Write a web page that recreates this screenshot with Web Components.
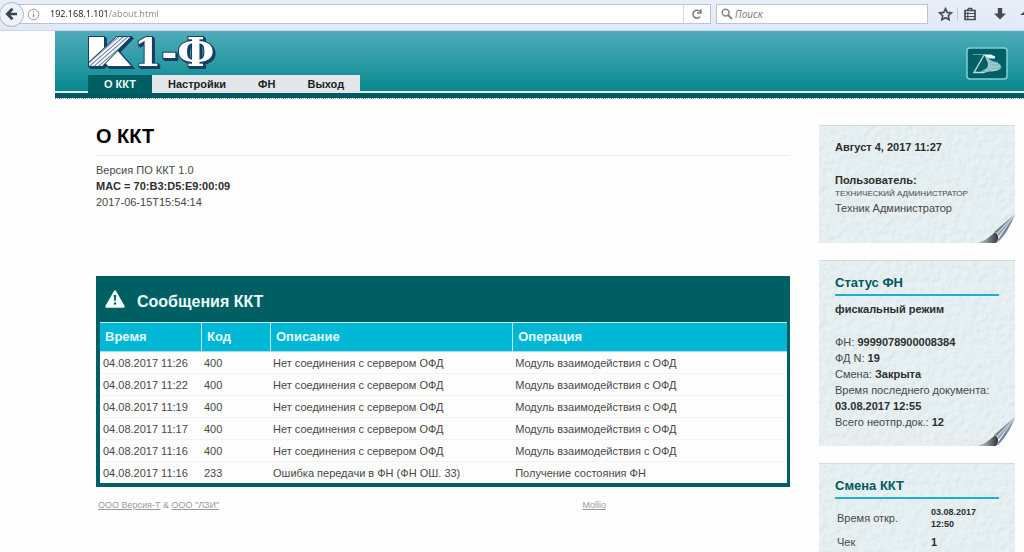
<!DOCTYPE html>
<html lang="ru">
<head>
<meta charset="utf-8">
<title>О ККТ</title>
<style>
html,body{margin:0;height:100%}
body{background:#fefefe;color:#484848;font:11px/16px "Liberation Sans",Arial,sans-serif;overflow:hidden}
</style>
</head>
<body>
<kkt-app></kkt-app>
<script>
const define=(name,html,setup)=>customElements.define(name,class extends HTMLElement{
  constructor(){
    super();
    const t=document.createElement('template');
    t.innerHTML=html;
    this.attachShadow({mode:'open'}).append(t.content.cloneNode(true));
  }
  connectedCallback(){if(setup)setup(this,this.shadowRoot)}
});

define('browser-bar',`<style>
:host{display:flex;align-items:center;height:31px;box-sizing:border-box;padding:0 0 2px;background:linear-gradient(#e9eff8,#dfe9f7);border-bottom:1px solid #ccd6e4;overflow:hidden;font:10px/16px "Noto Sans",sans-serif}
button{border:0;background:none;padding:0;display:grid;place-items:center;flex:none}
.back{width:25px;height:25px;margin-left:-1px;border:1px solid #a9b7c9;border-radius:50%;background:#edf3fb;z-index:1}
.url,.search{display:flex;align-items:center;height:20px;box-sizing:border-box;background:#fff;border:1px solid #b9c5d4}
.url{flex:1 1 700px;margin-left:-6px;padding-left:9px;border-left:0}
.search{flex:0 1 214px;margin-left:5px;padding-left:4px;gap:2px}
input{border:0;outline:0;padding:0;min-width:0;flex:1;font:inherit;height:16px;background:none;color:#222}
.address{margin-left:10px;background:linear-gradient(90deg,#222 59px,#8d8d8d 59px);-webkit-background-clip:text;background-clip:text;-webkit-text-fill-color:transparent;font-size:9px}
.search input{font-style:italic}
.search input::placeholder{color:#7b7b7b;opacity:1}
.reload{width:27px;height:18px;border-left:1px solid #d4dae2}
.info{flex:none}
nav{display:flex;align-items:center;flex:none;width:96px;padding-left:9px;box-sizing:border-box;overflow:hidden}
.fav{width:17px}.lib{width:24px;margin-left:3px;border-left:1px solid #c3ccd8}.down{width:16px;margin-left:11px}.next{width:12px;margin-left:12px}
</style>
<button class="back" aria-label="Назад"><svg width="14" height="14" viewBox="0 0 14 14"><path d="M7.5 1.8 2.3 7l5.2 5.2M2.8 7H12" fill="none" stroke="#3c4450" stroke-width="2.7"/></svg></button>
<div class="url"><svg class="info" width="13" height="13" viewBox="0 0 13 13" fill="none" stroke="#979797"><circle cx="6.5" cy="6.5" r="5.3"/><path d="M6.5 5.6v4M6.5 3v1.3" stroke-width="1.3"/></svg>
<input class="address" aria-label="Адрес" value="192.168.1.101/about.html">
<button class="reload" aria-label="Обновить"><svg width="12" height="12" viewBox="0 0 12 12"><path d="M9.2 8.6A4 4 0 1 1 9 3.5M9.9 1v4H6" fill="none" stroke="#7c7c7c" stroke-width="1.5"/></svg></button></div>
<div class="search"><svg width="12" height="12" viewBox="0 0 12 12" fill="none" stroke="#858585"><circle cx="4.6" cy="4.6" r="3.4" stroke-width="1.5"/><path d="m7 7 4 4" stroke-width="2"/></svg><input type="search" aria-label="Поиск" placeholder="Поиск"></div>
<nav>
<button class="fav" aria-label="Закладка"><svg width="15" height="15" viewBox="0 0 15 15"><path d="m7.5 1.7 1.7 3.7 4.1.5-3 2.8.8 4-3.6-2-3.6 2 .8-4-3-2.8 4.1-.5z" fill="none" stroke="#454b55" stroke-width="1.6"/></svg></button>
<button class="lib" aria-label="Библиотека"><svg width="14" height="14" viewBox="0 0 14 14" fill="none" stroke="#454b55"><path d="M2 3.5h10v9H2z" stroke-width="1.7"/><path d="M4.500 3.200 5.600 1.400h2.800l1.100 1.800" stroke-width="1.500"/><path d="M2 6.500h10M2 9.500h10M4.800 5v7"/></svg></button>
<button class="down" aria-label="Загрузки"><svg width="14" height="14" viewBox="0 0 14 14"><path d="M4.800 1h4.400v5.500H13l-6 6-6-6h3.800z" fill="#454b55"/></svg></button>
<button class="next" aria-label="Домой"><svg width="12" height="14" viewBox="0 0 12 14"><path d="m0 8 6-5 6 5z" fill="#454b55"/></svg></button>
</nav>`);

define('kkt-logo',`<style>
:host{display:block;height:40px}
svg{display:block;overflow:visible}
.lift{filter:drop-shadow(1px 1px 0 #173e63) drop-shadow(1px 1px 0 #173e63)}
</style>
<svg width="130" height="40" viewBox="0 0 130 40" role="img" aria-label="К1-Ф">
<defs><pattern id="s" width="3" height="3" patternUnits="userSpaceOnUse" patternTransform="rotate(-41)"><rect width="3" height="3" fill="#f4f8fc"/><rect width="3" height="1" fill="#6c819a"/></pattern></defs>
<g class="lift">
<g fill="#fff" stroke="#173e63" stroke-width="2" paint-order="stroke"><path d="M1 2h15v12L1 28z"/><path d="M22 17l6-3 15 17H20l-5-6z"/><path d="M29 2h13L14 31H1v-3z"/></g>
<path d="M29 2h13L14 31H1v-3z" fill="url(#s)"/>
<text x="46" y="31" font-family="DejaVu Serif,serif" font-weight="700" font-size="39" fill="#fff" stroke="#173e63" stroke-width="2" paint-order="stroke">1-Ф</text>
</g>
</svg>`);

define('kkt-header',`<style>
:host{display:flex;justify-content:space-between;align-items:flex-start;position:relative;height:62px;margin-left:55px;background:linear-gradient(#4fabb9,#2899a3 55%,#07858d);border-bottom:5px solid #005a60}
:host::before{content:"";position:absolute;left:0;right:0;bottom:0;height:2px;background:#def4f3}
:host::after{content:"";position:absolute;left:0;right:0;top:67px;border-top:1px dotted #77a9ab}
.left{padding:4px 0 0 33px;position:relative;z-index:1}
nav{display:flex;width:max-content;background:#e3e7e9}
a{padding:1px 16px;height:16px;font:bold 11px/17px "Liberation Sans",sans-serif;color:#1d1d1d;text-decoration:none;text-align:center}
a.on{background:#005f63;color:#e8f8f8;padding-bottom:2px;margin-bottom:-1px}
.brand{margin:16px 16px 0 0}
</style>
<div class="left"><kkt-logo></kkt-logo><nav><a class="on" href="#about">О ККТ</a><a href="#settings">Настройки</a><a href="#fn">ФН</a><a href="#exit">Выход</a></nav></div>
<svg class="brand" width="42" height="33" viewBox="0 0 42 33"><rect x="1" y="1" width="40" height="31" rx="3" fill="#025f66" stroke="#80d1d3" stroke-width="1.5"/><path d="M7 7.500h12" stroke="#5aa5a9"/><path d="M18 8 8 25.500h9c5-1 8-3 12-5" fill="none" stroke="#b9dcdd" stroke-width="1.400"/><path d="M18 7.500h7l4 2v2h-5l-5-2z" fill="#eefafa"/><path d="M19 9c2 1 4 2 5 4 5 2 11 3 11 7 0 3-5 4-9 4.500H14c6-2 8-4 8-7 0-3-2-5-3-8.500z" fill="#9fcccd"/><path d="M23 15h9M24 18h11M21 21h15M17 24h9" stroke="#5e9fa3" stroke-width=".6"/></svg>`);

define('message-table',`<style>
:host{display:block;background:#005f63;padding:4px 3px 4px 4px}
header{display:flex;align-items:center;gap:12px;height:42px;padding-left:5px}
header svg{margin-bottom:5px}
h2{margin:2px 0 0;font-size:16px;line-height:18px;color:#ecfafa}
table{width:100%;border-collapse:separate;border-spacing:0;table-layout:fixed;background:#fdfdfd}
th{height:28px;padding:0 0 0 5px;text-align:left;font-size:13px;line-height:16px;color:#e9fbff;background:#00b7d6;border-top:1px solid #c8f1f6;border-bottom:1px solid #a4dfe8}
th+th{border-left:1px solid #b9ecf4}
td{height:21px;padding:0 0 0 3px;border-bottom:1px solid #f2f4f4;white-space:nowrap}
tr:last-child td{border-bottom:0}
col.t{width:101px}col.c{width:69px}col.o{width:40%}
</style>
<header><svg width="20" height="18" viewBox="0 0 20 18"><path d="M10 1.500 18.500 16.500h-17z" fill="#f2fbfb" stroke="#f2fbfb" stroke-width="2.500" stroke-linejoin="round"/><path d="M8.800 5h2.400l-.5 6H9.300z" fill="#005f63"/><circle cx="10" cy="13.500" r="1.200" fill="#005f63"/></svg><h2>Сообщения ККТ</h2></header>
<table><colgroup><col class="t"><col class="c"><col><col class="o"></colgroup><thead><tr><th>Время</th><th>Код</th><th>Описание</th><th>Операция</th></tr></thead><tbody></tbody></table>`,(el,root)=>{
  const no='Нет соединения с сервером ОФД',mod='Модуль взаимодействия с ОФД';
  const rows=[['11:26',400,no,mod],['11:22',400,no,mod],['11:19',400,no,mod],['11:17',400,no,mod],['11:16',400,no,mod],['11:16',233,'Ошибка передачи в ФН (ФН ОШ. 33)','Получение состояния ФН']];
  root.querySelector('tbody').innerHTML=rows.map(r=>`<tr><td>04.08.2017 ${r[0]}</td><td>${r[1]}</td><td>${r[2]}</td><td>${r[3]}</td></tr>`).join('');
});

define('paper-card',`<style>
:host{display:block;position:relative;padding:13px 16px 16px;background:#e3edef;border-top:1px solid #d3dadc;box-sizing:border-box}
.paper{position:absolute;inset:0;width:100%;height:100%}
.curl{position:absolute;right:0;bottom:0}
.body{position:relative}
::slotted(h2){margin:0 0 5px!important;padding-bottom:2px;border-bottom:2px solid #1bb1c9;font-size:13px!important;line-height:18px!important;color:#00595e}
</style>
<svg class="paper" aria-hidden="true"><filter id="p" x="0" y="0" width="100%" height="100%"><feTurbulence type="fractalNoise" baseFrequency=".16" numOctaves="3" seed="8"/><feDiffuseLighting surfaceScale="1" diffuseConstant="1.140" lighting-color="#e9f2f3"><feDistantLight azimuth="225" elevation="62"/></feDiffuseLighting></filter><rect width="100%" height="100%" filter="url(#p)" opacity=".4"/></svg>
<svg class="curl" width="40" height="30" viewBox="0 0 40 30" aria-hidden="true"><defs><linearGradient id="a"><stop offset="0" stop-color="#dce5e6"/><stop offset=".5" stop-color="#8c9597"/><stop offset="1" stop-color="#2a3033"/></linearGradient></defs><path d="M40 2v28H18z" fill="#fdfdfd"/><path d="M0 30c8-1 14-5 20-11 4 2 5 7 1 11z" fill="url(#a)"/><path d="M40 1 19 19c4 1 6 6 2 11 8-5 13-15 19-29z" fill="#eef3f5"/><path d="M40 1 19 19l3 1z" fill="#72848f"/><path d="M40 2 22 21l2 2z" fill="#94a5b0"/><path d="M40 2 24 25l-3 5c8-5 13-15 19-28z" fill="#7389a0"/></svg>
<div class="body"><slot></slot></div>`);

define('kkt-main',`<style>
:host{display:block;min-width:0}
h1{margin:0 0 6px;padding-bottom:8px;border-bottom:1px solid #ececec;font-size:20px;line-height:22px;color:#000}
p{margin:0 0 66px}b{color:#2e2e2e}
footer{display:grid;grid-template-columns:70% 1fr;margin-top:11px;padding-left:2px;font-size:9px;line-height:14px;color:#9b9b9b}
a{color:inherit}
</style>
<h1>О ККТ</h1><p>Версия ПО ККТ 1.0<br><b>MAC = 70:B3:D5:E9:00:09</b><br>2017-06-15T15:54:14</p>
<message-table></message-table>
<footer><span><a href="#versiya">ООО Версия-Т</a> &amp; <a href="#lzi">ООО "ЛЗИ"</a></span><span><a href="#mollio">Mollio</a></span></footer>`);

define('kkt-sidebar',`<style>
:host{display:grid;gap:17px;align-content:start}
b{color:#2e2e2e}p{margin:0}p+p{margin-top:17px}
.user{padding-bottom:27px}
.shift{padding-bottom:40px}
small{display:block;font-size:8px;line-height:12px}
table{border-collapse:collapse;width:100%}
th,td{padding:0 2px;text-align:left;font-weight:400;height:20px}
td{width:66px;font-weight:700;color:#2e2e2e}
.tall th,.tall td{height:28px}
.tall td{font-size:9px;line-height:12px}
</style>
<paper-card class="user"><p><b>Август 4, 2017 11:27</b></p><p><b>Пользователь:</b><small>ТЕХНИЧЕСКИЙ АДМИНИСТРАТОР</small>Техник Администратор</p></paper-card>
<paper-card><h2>Статус ФН</h2><p><b>фискальный режим</b></p><p>ФН: <b>9999078900008384</b><br>ФД N: <b>19</b><br>Смена: <b>Закрыта</b><br>Время последнего документа:<br><b>03.08.2017 12:55</b><br>Всего неотпр.док.: <b>12</b></p></paper-card>
<paper-card class="shift"><h2>Смена ККТ</h2><table><tr class="tall"><th scope="row">Время откр.</th><td>03.08.2017<br>12:50</td></tr><tr><th scope="row">Чек</th><td>1</td></tr></table></paper-card>`);

define('kkt-app',`<style>
:host{display:flex;flex-direction:column;height:100vh;overflow:hidden}
browser-bar,kkt-header{flex:none}
.page{flex:1;min-height:0;display:grid;grid-template-columns:minmax(0,1fr) 196px;gap:29px;padding:27px 9px 0 96px}
</style>
<browser-bar></browser-bar><kkt-header></kkt-header><div class="page"><kkt-main></kkt-main><kkt-sidebar></kkt-sidebar></div>`);
</script>
</body>
</html>
